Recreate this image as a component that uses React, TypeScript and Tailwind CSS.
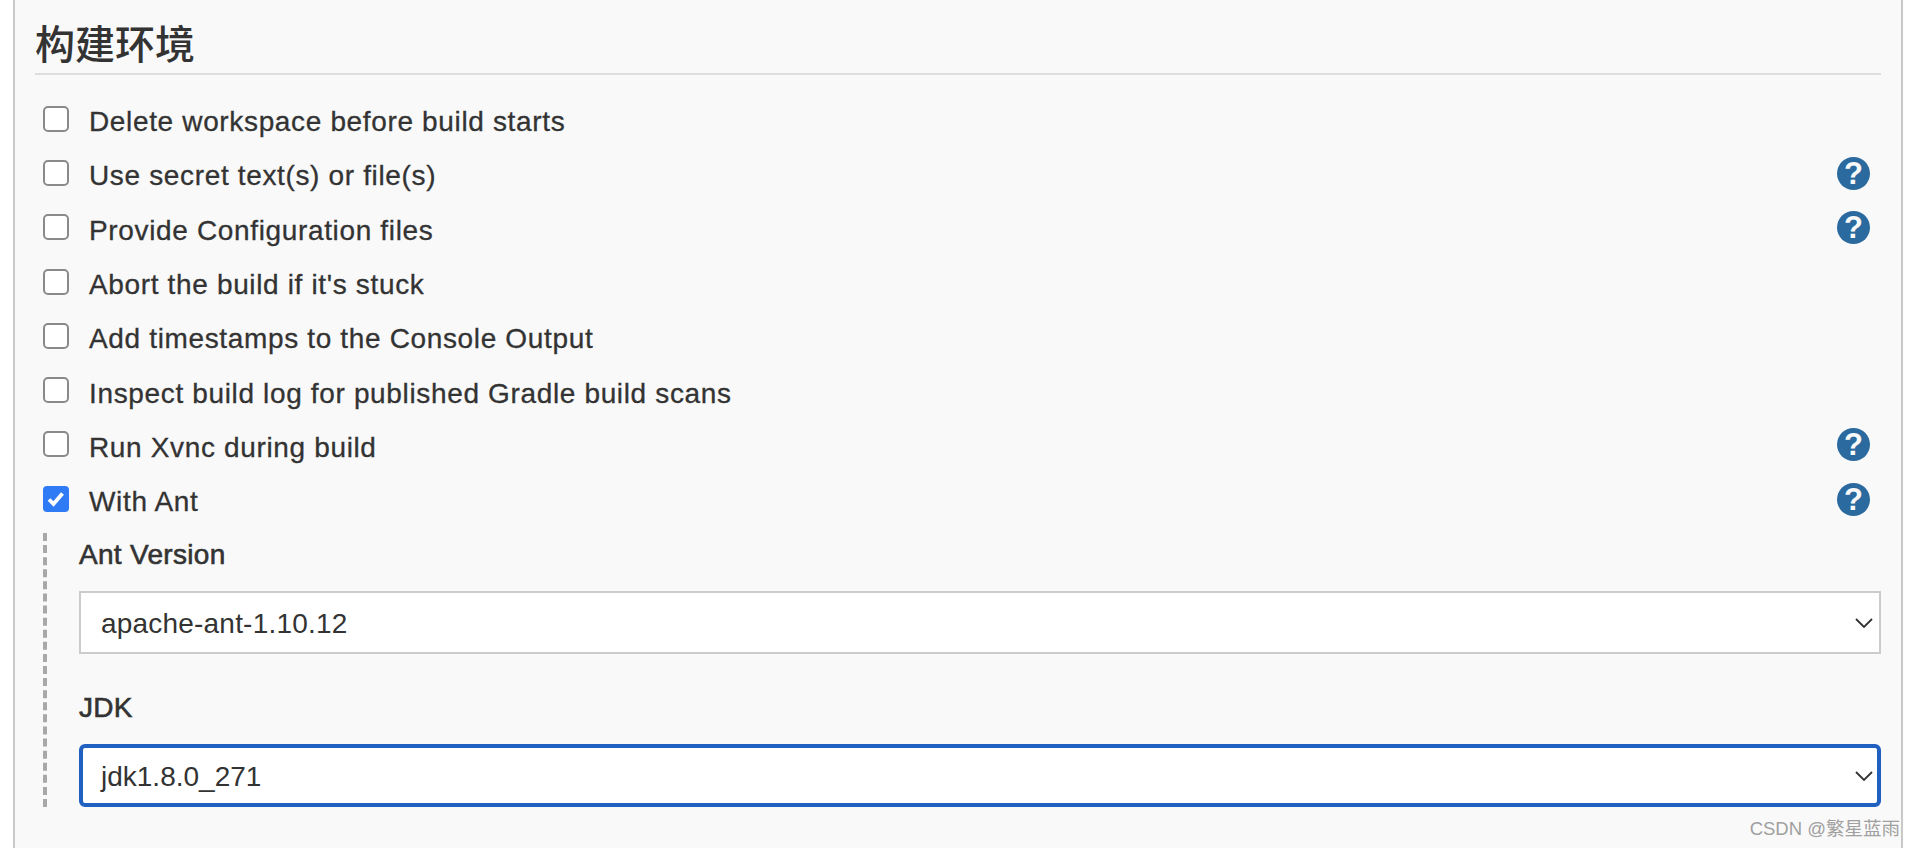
const rows = [
  { label: 'Delete workspace before build starts', help: false },
  { label: 'Use secret text(s) or file(s)', help: true },
  { label: 'Provide Configuration files', help: true },
  { label: "Abort the build if it's stuck", help: false },
  { label: 'Add timestamps to the Console Output', help: false },
  { label: 'Inspect build log for published Gradle build scans', help: false },
  { label: 'Run Xvnc during build', help: true },
  { label: 'With Ant', help: true, checked: true },
]

function Chevron() {
  return (
    <svg width="18" height="10" viewBox="0 0 18 10" fill="none" className="shrink-0">
      <path d="M1 1l8 8 8-8" stroke="#333" strokeWidth="1.8" />
    </svg>
  )
}

function Checkbox({ checked }: { checked?: boolean }) {
  if (checked) {
    return (
      <span className="mb-[5px] flex h-[26px] w-[26px] shrink-0 items-center justify-center rounded-[4px] bg-[#2f7bf6]">
        <svg width="20" height="18" viewBox="0 0 20 18" fill="none">
          <path d="M3 9.5l4.5 4.5L16.5 3.5" stroke="#fff" strokeWidth="3.8" />
        </svg>
      </span>
    )
  }
  return <span className="mb-[5px] h-[26px] w-[26px] shrink-0 rounded-[5px] border-[2px] border-[#8a8a8a] bg-white" />
}

function Help() {
  return (
    <span className="mb-[4px] mr-[11px] flex h-[33px] w-[33px] items-center justify-center rounded-full bg-[#2b6a9f] text-[31px] font-bold leading-none text-[#f9f9f9]">
      ?
    </span>
  )
}

function Row({ label, help, checked }: { label: string; help: boolean; checked?: boolean }) {
  return (
    <div className="flex h-[54.3px] items-center">
      <Checkbox checked={checked} />
      <span className="ml-[20px] flex-1 pt-[2px] text-[28px] leading-none tracking-[0.65px] text-[#333] [-webkit-text-stroke:0.3px_#333]">
        {label}
      </span>
      {help && <Help />}
    </div>
  )
}

export default function App() {
  return (
    <div className="relative h-[848px] bg-white pl-[13px] pr-[13px] font-['Liberation_Sans','Noto_Sans_CJK_SC',sans-serif]">
      <div className="h-full border-x-[2px] border-[#c8c8c8] bg-[#f9f9f9] pl-[20px] pr-[20px]">
        <div className="flex h-[75px] items-end border-b-[2px] border-[#dedede] pb-[5px]">
          <h2 className="text-[40px] font-medium leading-[46px] text-[#333]">构建环境</h2>
        </div>

        <div className="pl-[8px] pt-[19px]">
          {rows.map(row => (
            <Row key={row.label} {...row} />
          ))}
        </div>

        {/* With Ant options */}
        <div className="ml-[8px] mt-[5px] border-l-[4px] border-dashed border-[#a8a8a8] pl-[32px]">
          <div className="mb-[16px] flex h-[42px] items-center pt-[2px] text-[28px] leading-none tracking-[0.3px] text-[#333] [-webkit-text-stroke:0.6px_#333]">
            Ant Version
          </div>
          <div className="flex h-[63px] items-center justify-between border-[2px] border-[#ccc] bg-white pl-[20px] pr-[6px] text-[28px] text-[#333]">
            <span className="pt-[3px] tracking-[0.2px]">apache-ant-1.10.12</span>
            <Chevron />
          </div>
          <div className="flex h-[90px] items-center pt-[18px] text-[28px] leading-none tracking-[0.3px] text-[#333] [-webkit-text-stroke:0.6px_#333]">
            JDK
          </div>
          <div className="flex h-[63px] items-center justify-between rounded-[6px] border-[4px] border-[#2060c0] bg-white pl-[18px] pr-[4px] text-[28px] text-[#333]">
            <span className="pt-[2px]">jdk1.8.0_271</span>
            <Chevron />
          </div>
        </div>
      </div>

      <span className="absolute bottom-[7px] right-[16px] text-[18.5px] leading-[24px] text-[#a0a0a0]">CSDN @繁星蓝雨</span>
    </div>
  )
}
